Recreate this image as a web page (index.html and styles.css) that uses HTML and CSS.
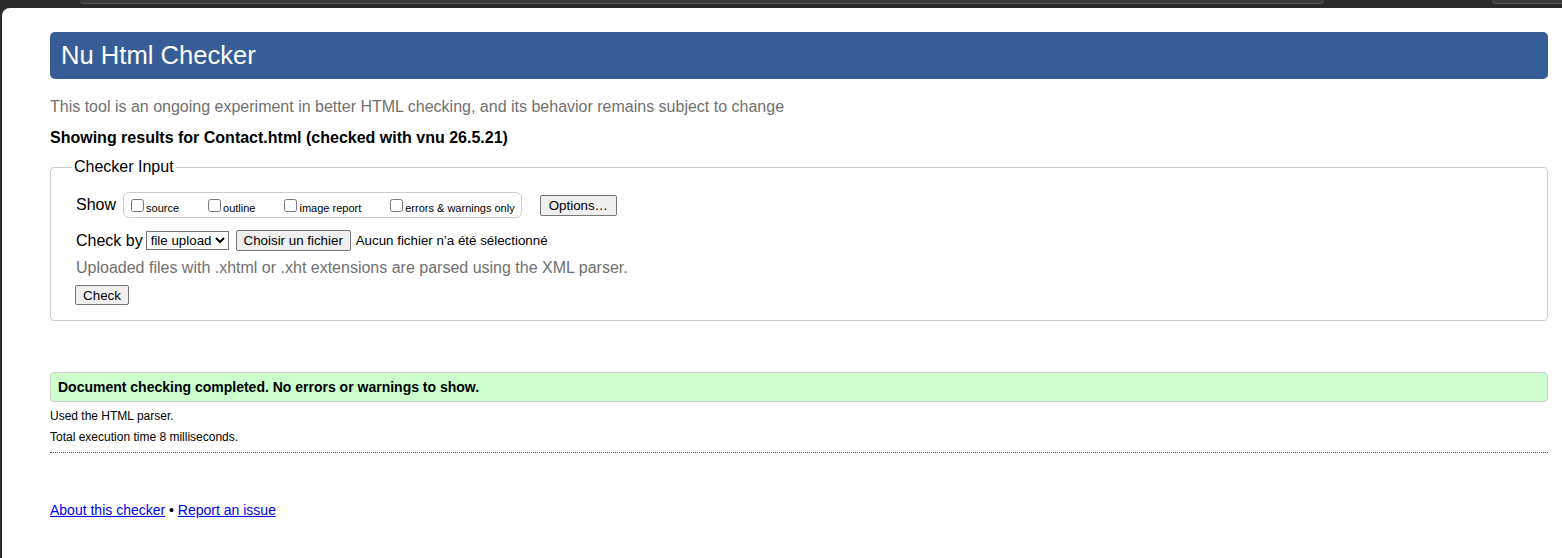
FILE: index.html
```html
<!DOCTYPE html>
<html lang="en">
<head>
<meta charset="utf-8">
<title>Showing results for Contact.html - Nu Html Checker</title>
<link rel="stylesheet" href="styles.css">
</head>
<body>
<div class="chrome">
  <div class="chrome-gap chrome-gap-left"></div>
  <div class="chrome-bar chrome-bar-main"></div>
  <div class="chrome-gap chrome-gap-mid"></div>
  <div class="chrome-bar chrome-bar-side"></div>
</div>
<div class="frame">
  <div class="page">
    <h1 class="title">Nu Html Checker</h1>
    <p class="intro">This tool is an ongoing experiment in better HTML checking, and its behavior remains subject to change</p>
    <p class="results-for">Showing results for Contact.html (checked with vnu 26.5.21)</p>

    <fieldset class="checker-input">
      <legend class="legend">Checker Input</legend>
      <div class="row row-show">
        <span class="row-label">Show</span>
        <div class="show-box">
          <label class="opt opt-source"><input type="checkbox" class="cb"><span class="opt-text">source</span></label>
          <label class="opt opt-outline"><input type="checkbox" class="cb"><span class="opt-text">outline</span></label>
          <label class="opt opt-image"><input type="checkbox" class="cb"><span class="opt-text">image report</span></label>
          <label class="opt opt-errors"><input type="checkbox" class="cb"><span class="opt-text">errors &amp; warnings only</span></label>
        </div>
        <button class="btn btn-options" type="button">Options…</button>
      </div>
      <div class="row row-checkby">
        <span class="row-label">Check by</span>
        <select class="select">
          <option>file upload</option>
        </select>
        <button class="btn btn-file" type="button">Choisir un fichier</button>
        <span class="file-status">Aucun fichier n’a été sélectionné</span>
      </div>
      <p class="upload-note">Uploaded files with .xhtml or .xht extensions are parsed using the XML parser.</p>
      <div class="row row-submit">
        <button class="btn btn-check" type="button">Check</button>
      </div>
    </fieldset>

    <div class="success">Document checking completed. No errors or warnings to show.</div>
    <p class="details details-first">Used the HTML parser.</p>
    <p class="details">Total execution time 8 milliseconds.</p>
    <hr class="rule">

    <p class="footer"><a class="link" href="#">About this checker</a> • <a class="link" href="#">Report an issue</a></p>
  </div>
</div>
</body>
</html>
```

FILE: styles.css
```css
html, body {
  margin: 0;
  padding: 0;
  height: 558px;
  overflow: hidden;
}

body {
  background: #2b2b2b;
  font-family: "Liberation Sans", Arial, sans-serif;
  display: flex;
  flex-direction: column;
}

.chrome {
  height: 8px;
  display: flex;
  flex: none;
}

.chrome-gap-left { width: 80px; }
.chrome-gap-mid { width: 168px; }

.chrome-bar {
  height: 3px;
  background: #3b3b3b;
  border-bottom: 1px solid #555;
  border-radius: 0 0 6px 6px;
}

.chrome-bar-main { width: 1244px; }
.chrome-bar-side { flex: 1; border-radius: 0 0 0 6px; }

.frame {
  flex: 1;
  margin-left: 2px;
  background: #fff;
  border-top-left-radius: 8px;
}

.page {
  padding: 24px 14px 0 48px;
  color: #000;
}

.title {
  margin: 0;
  height: 47px;
  display: flex;
  align-items: center;
  padding: 0 11px;
  background: #365d95;
  color: #fff;
  font-weight: normal;
  font-size: 25.6px;
  border-radius: 5px;
}

.intro {
  margin: 17px 0 0;
  font-size: 16px;
  line-height: 22px;
  color: #707070;
}

.results-for {
  margin: 9px 0 0;
  font-size: 16px;
  line-height: 22px;
  font-weight: bold;
}

.checker-input {
  margin: 9px 0 0;
  padding: 0 20px 15px 25px;
  border: 1px solid #ccc;
  border-radius: 4px;
}

.legend {
  font-size: 16px;
  padding: 0 2px;
  margin-left: -4px;
  line-height: 18px;
}

.row {
  display: flex;
  align-items: center;
}

.row-label {
  font-size: 16px;
}

.row-show {
  margin-top: 16px;
  height: 26px;
}

.show-box {
  margin-left: 7px;
  height: 24px;
  display: flex;
  align-items: center;
  border: 1px solid #ccc;
  border-radius: 6px;
  padding: 0 6px 0 3px;
}

.opt {
  display: flex;
  align-items: center;
  font-size: 11px;
  margin-right: 25px;
}

.opt-errors { margin-right: 0; }

.cb {
  margin: 0 2px 0 4px;
  width: 13px;
  height: 13px;
}

.opt-text {
  padding-top: 5px;
}

.btn {
  font-family: "Liberation Sans", Arial, sans-serif;
  font-size: 13.333px;
  background: #efefef;
  border: 1px solid #767676;
  border-radius: 2px;
  color: #000;
  padding: 1px 6px;
  line-height: 17px;
}

.btn-options {
  margin-left: 18px;
  height: 21px;
  padding: 0 8px;
}

.row-checkby {
  margin-top: 12px;
  height: 21px;
}

.select {
  margin-left: 3px;
  font-family: "Liberation Sans", Arial, sans-serif;
  font-size: 13.333px;
  height: 19px;
  width: 83px;
  border: 1px solid #767676;
  border-radius: 0;
  background: #fff;
  color: #000;
  padding: 0;
}

.btn-file {
  margin-left: 7px;
  height: 21px;
  width: 115px;
  padding: 0;
}

.file-status {
  margin-left: 5px;
  font-size: 13.333px;
}

.upload-note {
  margin: 8px 0 0;
  font-size: 16px;
  line-height: 18px;
  color: #707070;
}

.row-submit {
  margin-top: 8px;
}

.btn-check {
  margin-left: -1px;
  width: 54px;
  height: 20px;
  padding: 0;
}

.success {
  box-sizing: border-box;
  margin-top: 51px;
  height: 30px;
  display: flex;
  align-items: center;
  padding: 0 7px;
  background: #ccffcc;
  border: 1px solid #ccc;
  border-radius: 4px;
  font-size: 14px;
  font-weight: bold;
}

.details {
  margin: 0;
  font-size: 12px;
  line-height: 21px;
}

.details-first { margin-top: 4px; }

.rule {
  margin: 4px 0 0;
  border: 0;
  border-top: 1px dotted #555;
  height: 0;
}

.footer {
  margin: 48px 0 0;
  font-size: 14px;
  line-height: 18px;
}

.link {
  color: #0000ee;
  text-decoration: underline;
}
```
